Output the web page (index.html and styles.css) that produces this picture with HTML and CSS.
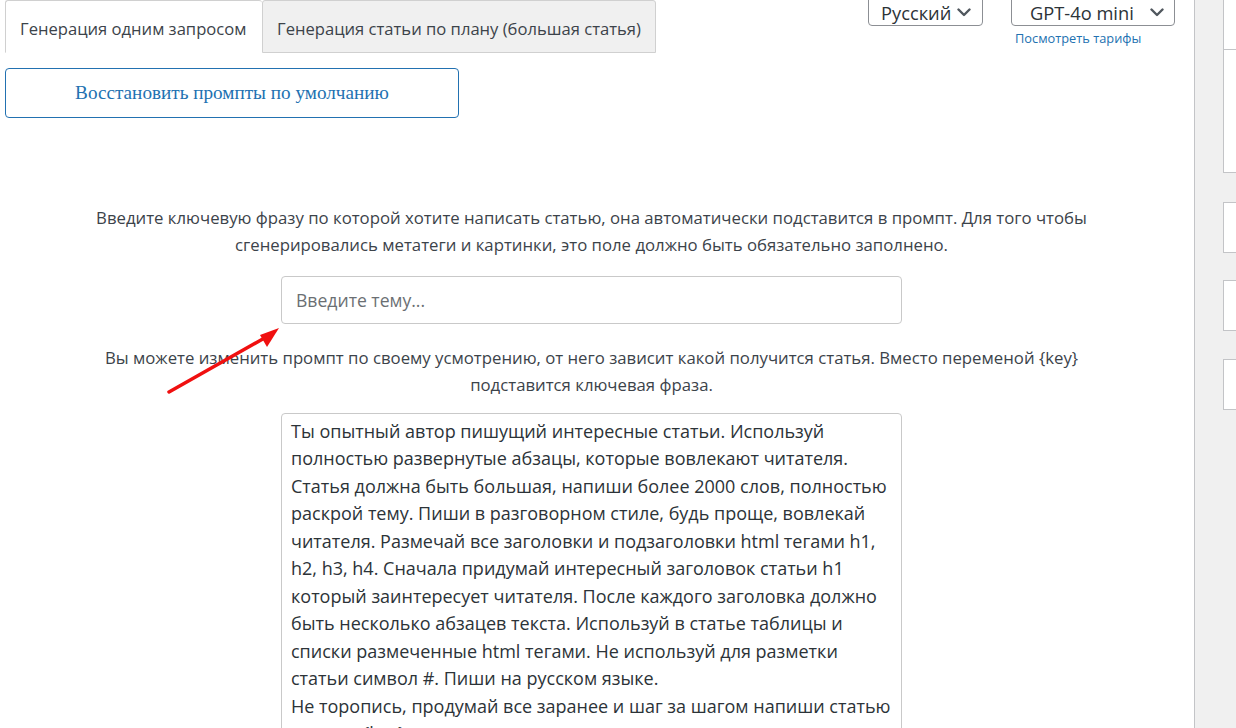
FILE: index.html
```html
<!DOCTYPE html>
<html lang="ru">
<head>
<meta charset="utf-8">
<title>Генерация статьи</title>
<link rel="stylesheet" href="styles.css">
</head>
<body>
<div class="page">
  <main class="main">
    <div class="topbar">
      <div class="tabs">
        <div class="tab tab-active">Генерация одним запросом</div>
        <div class="tab">Генерация статьи по плану (большая статья)</div>
      </div>
      <div class="controls">
        <div class="select select-lang">
          <span>Русский</span>
          <svg class="chev" width="14" height="9" viewBox="0 0 14 9"><path d="M1.5 1.5 L7 7 L12.5 1.5" fill="none" stroke="#50575e" stroke-width="2.4" stroke-linecap="round" stroke-linejoin="round"/></svg>
        </div>
        <div class="model-col">
          <div class="select select-model">
            <span>GPT-4o mini</span>
            <svg class="chev" width="14" height="9" viewBox="0 0 14 9"><path d="M1.5 1.5 L7 7 L12.5 1.5" fill="none" stroke="#50575e" stroke-width="2.4" stroke-linecap="round" stroke-linejoin="round"/></svg>
          </div>
          <a class="tariffs" href="#">Посмотреть тарифы</a>
        </div>
      </div>
    </div>

    <button class="reset">Восстановить промпты по умолчанию</button>

    <section class="gen">
      <p class="hint">Введите ключевую фразу по которой хотите написать статью, она автоматически подставится в промпт. Для того чтобы<br>сгенерировались метатеги и картинки, это поле должно быть обязательно заполнено.</p>
      <input class="topic" type="text" placeholder="Введите тему...">
      <p class="hint">Вы можете изменить промпт по своему усмотрению, от него зависит какой получится статья. Вместо переменой {key}<br>подставится ключевая фраза.</p>
      <textarea class="prompt" wrap="off">Ты опытный автор пишущий интересные статьи. Используй
полностью развернутые абзацы, которые вовлекают читателя.
Статья должна быть большая, напиши более 2000 слов, полностью
раскрой тему. Пиши в разговорном стиле, будь проще, вовлекай
читателя. Размечай все заголовки и подзаголовки html тегами h1,
h2, h3, h4. Сначала придумай интересный заголовок статьи h1
который заинтересует читателя. После каждого заголовка должно
быть несколько абзацев текста. Используй в статье таблицы и
списки размеченные html тегами. Не используй для разметки
статьи символ #. Пиши на русском языке.
Не торопись, продумай все заранее и шаг за шагом напиши статью
на тему {key}.</textarea>
    </section>

    <svg class="arrow" width="130" height="80" viewBox="0 0 130 80">
      <line x1="9" y1="72" x2="108" y2="16" stroke="#f01010" stroke-width="3.5" stroke-linecap="round"/>
      <polygon points="119,8 100,15 107,27" fill="#f01010"/>
    </svg>
  </main>
  <aside class="sidebar">
    <div class="sbox sbox-1"></div>
    <div class="sbox sbox-2"></div>
    <div class="sbox sbox-3"></div>
    <div class="sbox sbox-4"></div>
    <div class="sbox sbox-5"></div>
  </aside>
</div>
</body>
</html>
```

FILE: styles.css
```css
html, body {
  margin: 0;
  padding: 0;
  height: 100%;
  overflow: hidden;
  background: #ffffff;
}

body {
  font-family: "Open Sans", "Noto Sans", sans-serif;
  color: #3c434a;
}

.page {
  display: flex;
  height: 728px;
}

.main {
  position: relative;
  width: 1173px;
  padding-left: 5px;
  padding-right: 16px;
  flex: none;
}

.topbar {
  display: flex;
  justify-content: space-between;
  align-items: flex-start;
}

.tabs {
  display: flex;
}

.tab {
  height: 53px;
  box-sizing: border-box;
  padding: 4px 14px 0;
  display: flex;
  align-items: center;
  font-size: 16.6px;
  color: #3c434a;
  border: 1px solid #d0d0d0;
  border-radius: 3px 3px 0 0;
  background: #f0f0f0;
  white-space: nowrap;
}

.tab-active {
  background: #ffffff;
  border-bottom-color: #ffffff;
  border-right: none;
  width: 257px;
}

.controls {
  display: flex;
  gap: 28px;
  margin-right: 3px;
}

.select {
  box-sizing: border-box;
  height: 35px;
  margin-top: -9px;
  padding-top: 8px;
  border: 1px solid #8c8f94;
  border-radius: 4px;
  display: flex;
  align-items: center;
  justify-content: space-between;
  font-size: 18.3px;
  color: #2c3338;
  background: #fff;
}

.select-lang {
  width: 115px;
  padding-left: 12px;
  padding-right: 11px;
}

.select-model {
  width: 164px;
  padding-left: 18px;
  padding-right: 10px;
}

.chev {
  display: block;
}

.model-col {
  display: flex;
  flex-direction: column;
}

.tariffs {
  margin-top: 3px;
  margin-left: 4px;
  font-size: 12.8px;
  color: #2271b1;
  text-decoration: none;
}

.reset {
  display: block;
  margin-top: 15px;
  width: 454px;
  height: 50px;
  border: 1px solid #2271b1;
  border-radius: 4px;
  background: #ffffff;
  color: #2271b1;
  font-family: "Liberation Serif", serif;
  font-size: 19.2px;
  cursor: pointer;
}

.gen {
  margin-top: 86px;
  display: flex;
  flex-direction: column;
  align-items: center;
}

.hint {
  margin: 0;
  font-size: 16.75px;
  line-height: 27px;
  text-align: center;
  color: #3c434a;
  white-space: nowrap;
}

.topic {
  margin: 18px 0 20px;
  width: 621px;
  height: 48px;
  box-sizing: border-box;
  border: 1px solid #c9c9c9;
  border-radius: 4px;
  padding: 0 14px;
  font-family: "Open Sans", "Noto Sans", sans-serif;
  font-size: 17.6px;
  color: #2c3338;
}

.topic::placeholder {
  color: #6b6f73;
}

.prompt {
  margin-top: 15px;
  width: 621px;
  height: 500px;
  box-sizing: border-box;
  border: 1px solid #c9c9c9;
  border-radius: 4px;
  padding: 4px 9px;
  font-family: "Open Sans", "Noto Sans", sans-serif;
  font-size: 18px;
  line-height: 27.45px;
  color: #2c3338;
  overflow: hidden;
  resize: none;
}

.arrow {
  position: absolute;
  left: 160px;
  top: 320px;
}

.sidebar {
  flex: 1;
  border-left: 1px solid #c3c4c7;
  background: #f0f0f0;
  display: flex;
  flex-direction: column;
  align-items: flex-end;
}

.sbox {
  box-sizing: border-box;
  width: 13px;
  background: #ffffff;
  border: 1px solid #c3c4c7;
  border-right: none;
}

.sbox-1 { height: 51px; margin-top: -1px; }
.sbox-2 { height: 124px; margin-top: -1px; }
.sbox-3 { height: 51px; margin-top: 29px; }
.sbox-4 { height: 51px; margin-top: 27px; }
.sbox-5 { height: 51px; margin-top: 28px; }
```
